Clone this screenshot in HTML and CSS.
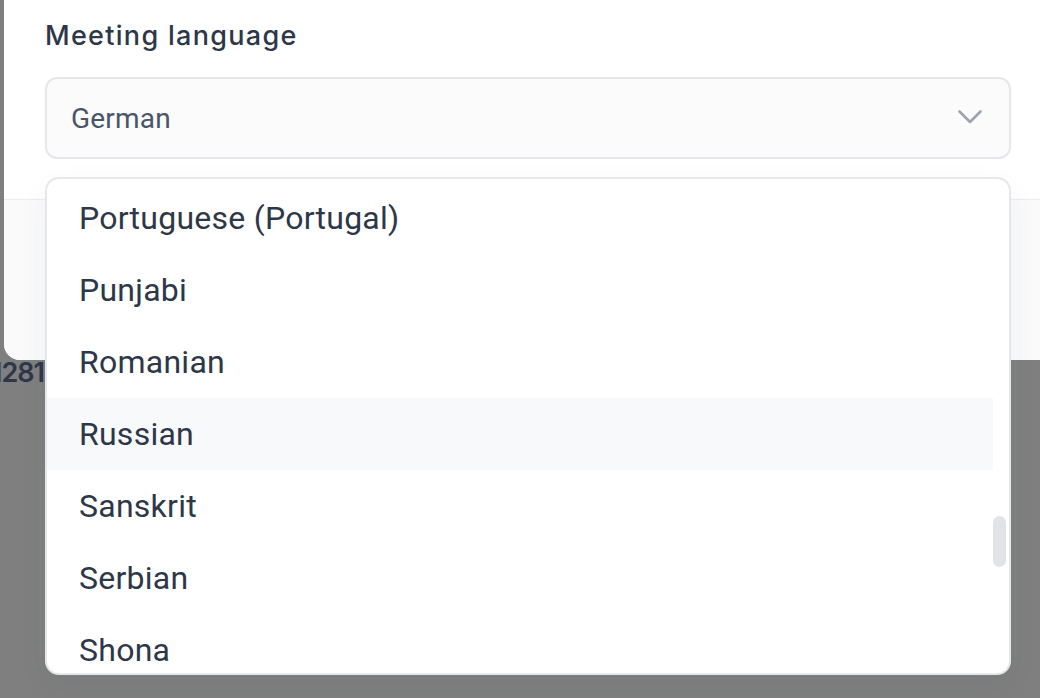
FILE: index.html
```html
<!DOCTYPE html>
<html>
<head>
<meta charset="utf-8">
<link rel="stylesheet" href="styles.css">
</head>
<body>
<div class="page">
  <div class="modal">
    <div class="body">
      <div class="label">Meeting language</div>
      <div class="select">
        <span class="value">German</span>
        <svg class="chev" width="24" height="14" viewBox="0 0 24 14"><path d="M1.5 1.5 L12 12 L22.5 1.5" fill="none" stroke="#9ca3af" stroke-width="2.6" stroke-linecap="round" stroke-linejoin="round"/></svg>
      </div>
    </div>
    <div class="footer"></div>
  </div>
  <div class="behind">1281</div>

  <div class="menu">
    <div class="list">
      <div class="item">Portuguese (Portugal)</div>
      <div class="item">Punjabi</div>
      <div class="item">Romanian</div>
      <div class="item hover">Russian</div>
      <div class="item">Sanskrit</div>
      <div class="item">Serbian</div>
      <div class="item">Shona</div>
    </div>
    <div class="track"><div class="thumb"></div></div>
  </div>
</div>
</body>
</html>
```

FILE: styles.css
```css
html, body {
  margin: 0;
  padding: 0;
}
body {
  background: #7f7f7f;
  width: 1040px;
  height: 698px;
  overflow: hidden;
}
.page {
  position: relative;
  width: 1040px;
  height: 698px;
}
.modal {
  margin-left: 4px;
  width: 1060px;
  height: 360px;
  background: #ffffff;
  border-bottom-left-radius: 16px;
  display: flex;
  flex-direction: column;
  overflow: hidden;
}
.body {
  height: 199px;
  padding-left: 41px;
  box-sizing: border-box;
  padding-top: 17px;
}
.label {
  font-family: "Inter", "Lato", sans-serif;
  font-weight: 500;
  font-size: 27px;
  line-height: 38px;
  color: #2d3748;
  letter-spacing: 1.3px;
}
.select {
  margin-top: 22px;
  width: 966px;
  height: 82px;
  box-sizing: border-box;
  border: 2px solid #e5e7eb;
  border-radius: 12px;
  background: #fbfbfc;
  display: flex;
  align-items: center;
  justify-content: space-between;
  padding: 0 27px 0 24px;
}
.value {
  font-family: "Roboto", sans-serif;
  font-size: 28px;
  color: #4a5568;
  letter-spacing: 0.2px;
}
.chev {
  display: block;
  margin-top: -2px;
}
.footer {
  flex: 1;
  border-top: 1px solid #ececef;
  background: #fafafb;
}
.behind {
  font-family: "Inter", sans-serif;
  font-weight: 600;
  font-size: 27px;
  color: #2d3748;
  margin-left: -9px;
  line-height: 26px;
  letter-spacing: -1px;
}
.menu {
  position: absolute;
  top: 177px;
  left: 45px;
  width: 966px;
  height: 498px;
  box-sizing: border-box;
  border: 2px solid #e5e7eb;
  border-radius: 14px;
  background: #ffffff;
  box-shadow: 0 10px 30px rgba(40, 50, 70, 0.05);
  overflow: hidden;
  display: flex;
}
.list {
  flex: 1;
  padding-top: 3px;
}
.item {
  height: 72px;
  display: flex;
  align-items: center;
  padding-left: 32px;
  font-family: "Roboto", sans-serif;
  font-size: 32px;
  color: #2d3748;
  letter-spacing: 0.25px;
}
.item.hover {
  background: #f8f9fb;
}
.track {
  width: 16px;
  position: relative;
}
.thumb {
  position: absolute;
  top: 337px;
  left: 0;
  width: 13px;
  height: 51px;
  border-radius: 7px;
  background: #e2e3e6;
}
```
